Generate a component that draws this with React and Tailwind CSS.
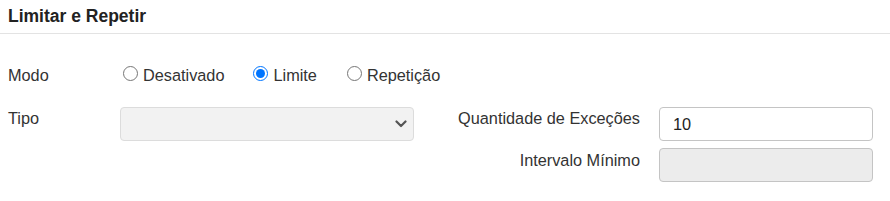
import React from "react";

function Radio({ checked, label }) {
  return (
    <label className="flex items-start">
      {checked ? (
        <span className="w-[15px] h-[15px] rounded-full border-[1.5px] border-[#0075ff] bg-white flex items-center justify-center">
          <span className="w-[9px] h-[9px] rounded-full bg-[#0075ff]" />
        </span>
      ) : (
        <span className="w-[15px] h-[15px] rounded-full border border-[#767676] bg-white" />
      )}
      <span className="ml-[5px] leading-[18px]">{label}</span>
    </label>
  );
}

export default function App() {
  return (
    <div
      className="w-[890px] h-[201px] bg-white text-[#333] text-[16.3px] overflow-hidden"
      style={{ fontFamily: '"Liberation Sans", Arial, sans-serif' }}
    >
      <div className="h-[34px] border-b border-[#e3e3e3] px-[8px] pt-[6px]">
        <h2 className="text-[17.5px] font-bold leading-[20px] text-[#222]">Limitar e Repetir</h2>
      </div>

      <div className="mt-[32px] flex items-start h-[18px]">
        <div className="w-[123px] pl-[8px] leading-[18px]">Modo</div>
        <div className="flex items-start">
          <Radio label="Desativado" />
          <div className="w-[29px]" />
          <Radio checked label="Limite" />
          <div className="w-[30px]" />
          <Radio label="Repetição" />
        </div>
      </div>

      <div className="mt-[23px] grid grid-cols-[120px_294px_245px_214px] gap-y-[7px]">
        <div className="pl-[8px] pt-[2px] leading-[18px]">Tipo</div>
        <div className="h-[34px] rounded-[4px] border border-[#dcdcdc] bg-[#f2f2f2] flex items-center justify-end pr-[6px]">
          <svg width="12" height="8" viewBox="0 0 12 8" fill="none">
            <path d="M1.5 1.5 L6 6 L10.5 1.5" stroke="#555" strokeWidth="2.2" strokeLinecap="round" strokeLinejoin="round" />
          </svg>
        </div>
        <div className="pr-[19px] pt-[2px] text-right leading-[18px]">Quantidade de Exceções</div>
        <div className="h-[34px] rounded-[4px] border border-[#c4c4c4] bg-white flex items-center pl-[13px] text-[#222]">
          10
        </div>

        <div />
        <div />
        <div className="pr-[19px] pt-[3px] text-right leading-[18px]">Intervalo Mínimo</div>
        <div className="h-[34px] rounded-[4px] border border-[#c4c4c4] bg-[#ececec]" />
      </div>
    </div>
  );
}
